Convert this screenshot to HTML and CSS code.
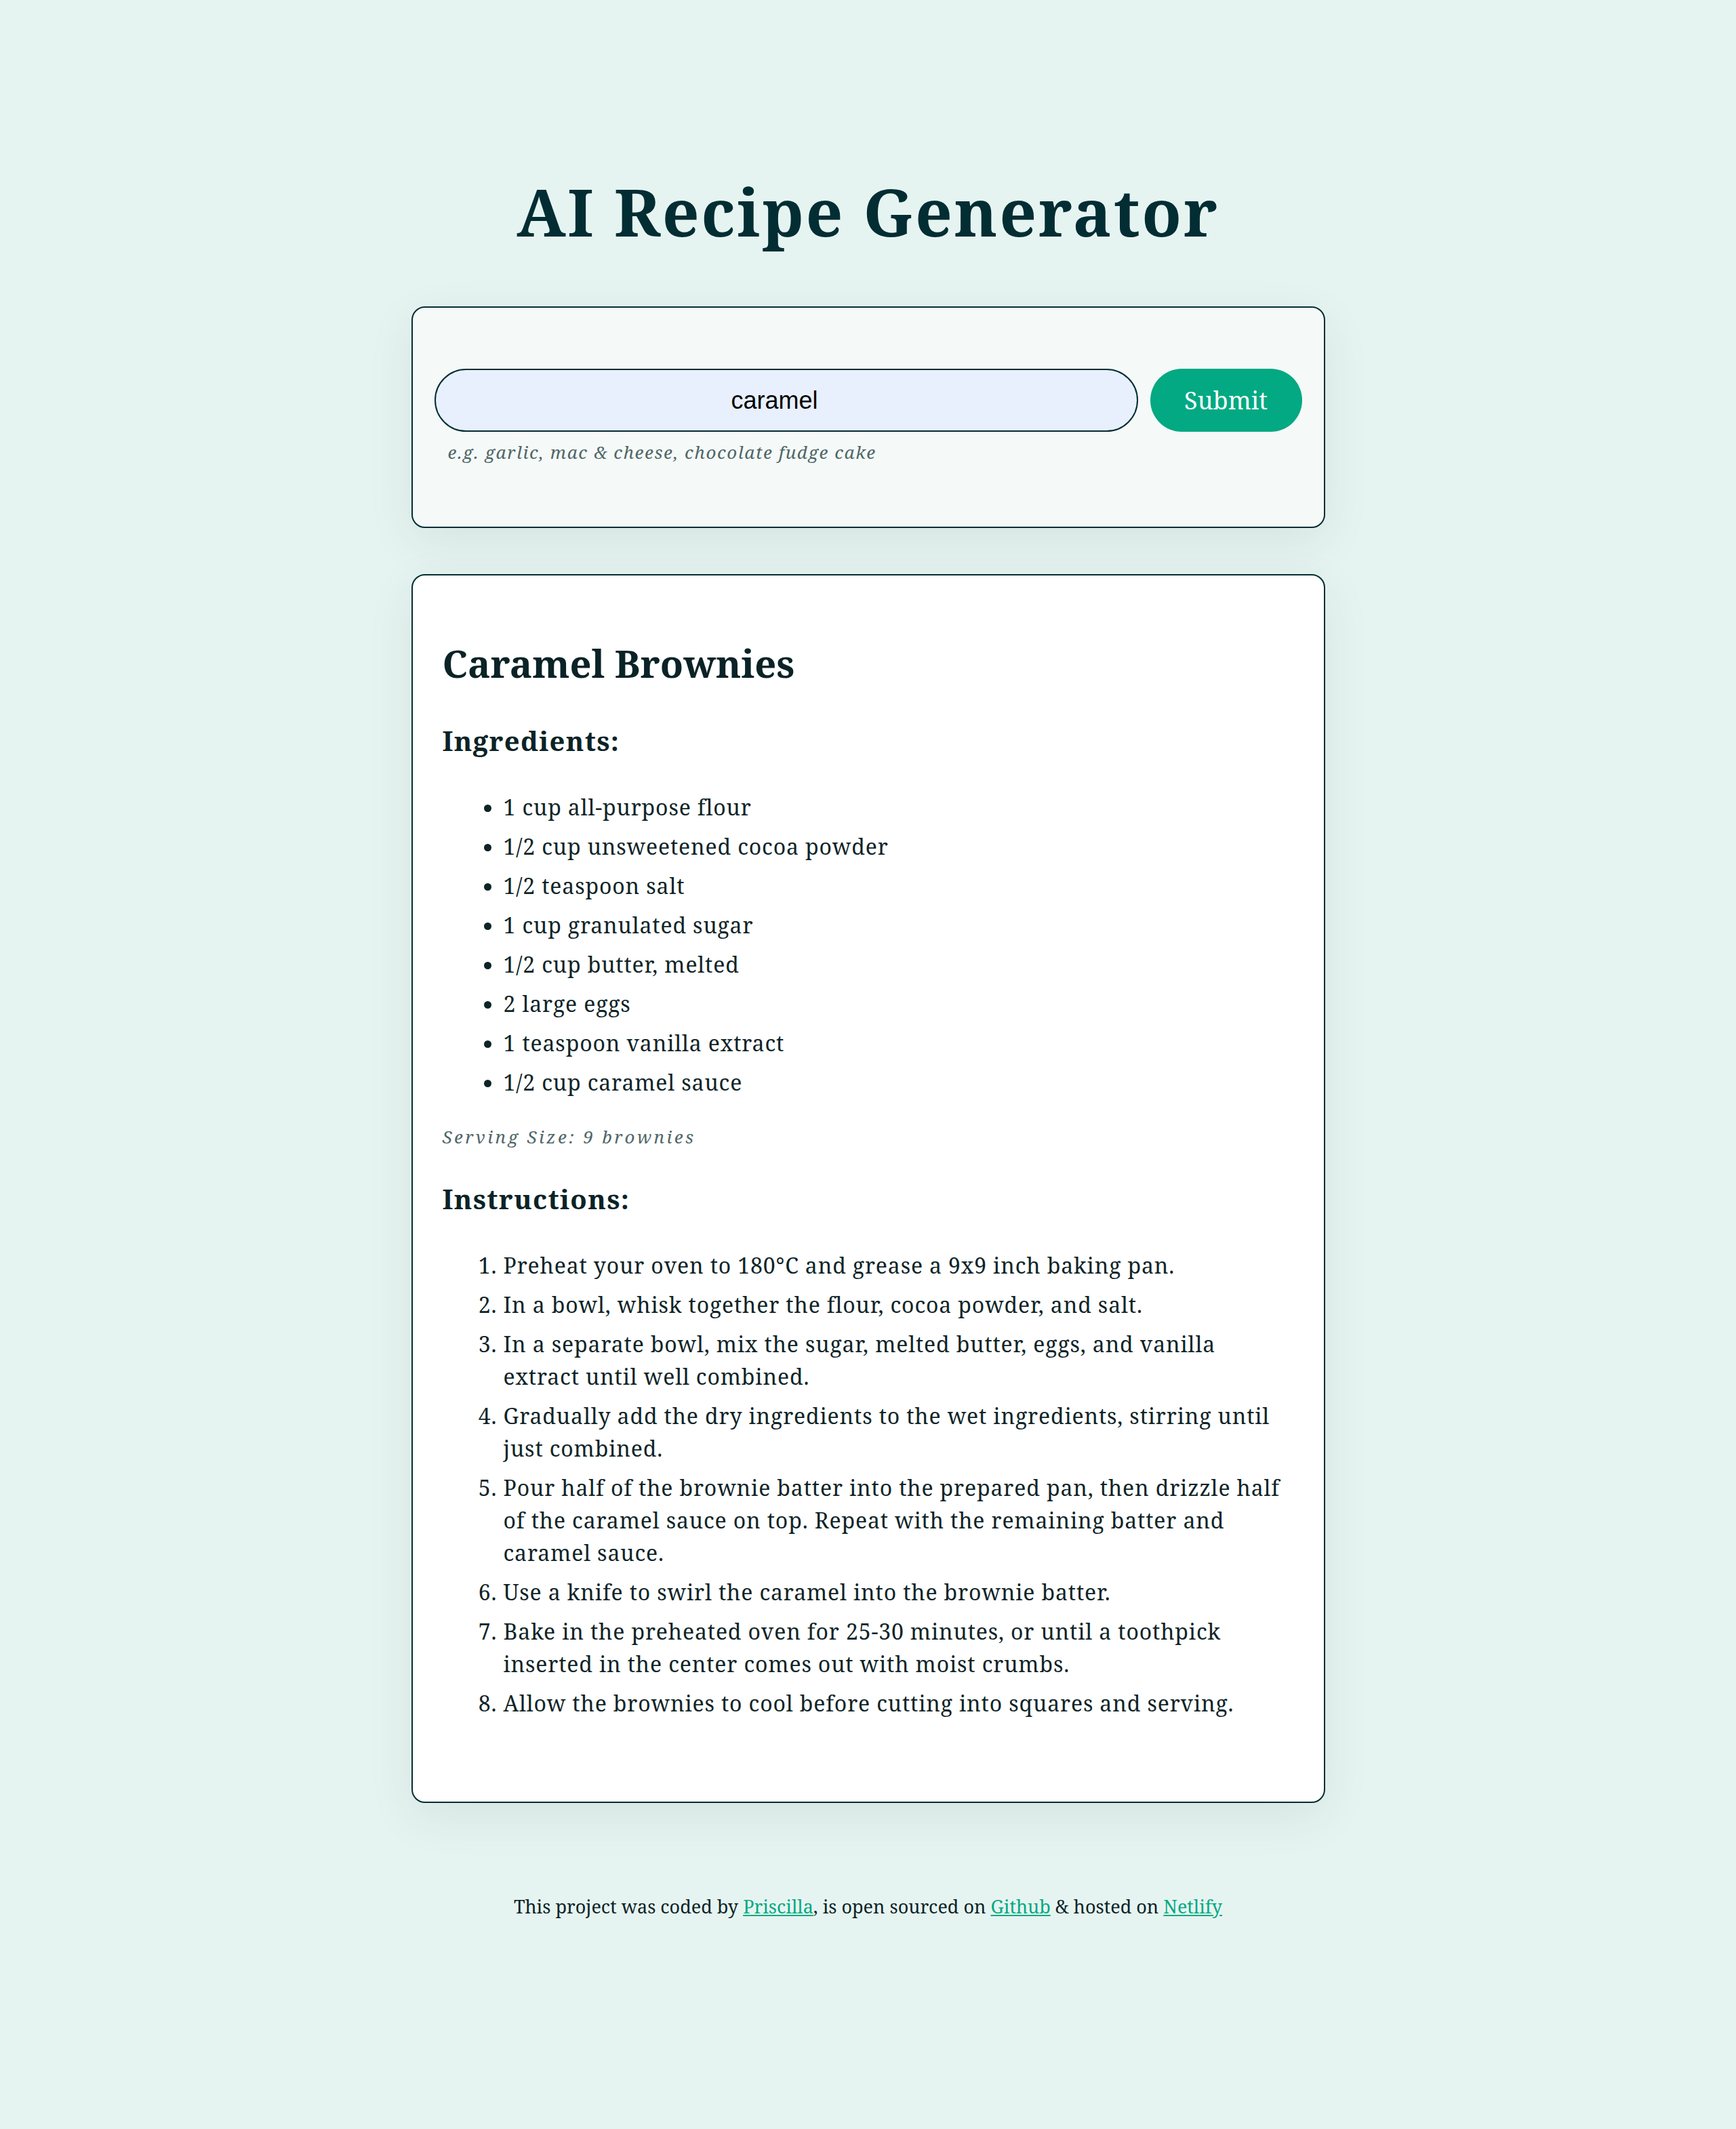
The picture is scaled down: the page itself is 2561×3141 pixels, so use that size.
FILE: index.html
```html
<!DOCTYPE html>
<html lang="en">
<head>
<meta charset="utf-8">
<title>AI Recipe Generator</title>
<link rel="stylesheet" href="styles.css">
</head>
<body>
<div class="container">
  <h1 class="title">AI Recipe Generator</h1>
  <div class="form-card">
    <form class="search-form">
      <input class="search-input" type="text" value="caramel">
      <button class="submit-btn" type="button">Submit</button>
    </form>
    <p class="hint">e.g. garlic, mac &amp; cheese, chocolate fudge cake</p>
  </div>
  <div class="recipe-card">
    <h2 class="recipe-title">Caramel Brownies</h2>
    <h3 class="section-title">Ingredients:</h3>
    <ul class="ingredients">
      <li>1 cup all-purpose flour</li>
      <li>1/2 cup unsweetened cocoa powder</li>
      <li>1/2 teaspoon salt</li>
      <li>1 cup granulated sugar</li>
      <li>1/2 cup butter, melted</li>
      <li>2 large eggs</li>
      <li>1 teaspoon vanilla extract</li>
      <li>1/2 cup caramel sauce</li>
    </ul>
    <p class="serving">Serving Size: 9 brownies</p>
    <h3 class="section-title instructions-title">Instructions:</h3>
    <ol class="instructions">
      <li>Preheat your oven to 180°C and grease a 9x9 inch baking pan.</li>
      <li>In a bowl, whisk together the flour, cocoa powder, and salt.</li>
      <li>In a separate bowl, mix the sugar, melted butter, eggs, and vanilla extract until well combined.</li>
      <li>Gradually add the dry ingredients to the wet ingredients, stirring until just combined.</li>
      <li>Pour half of the brownie batter into the prepared pan, then drizzle half of the caramel sauce on top. Repeat with the remaining batter and caramel sauce.</li>
      <li>Use a knife to swirl the caramel into the brownie batter.</li>
      <li>Bake in the preheated oven for 25-30 minutes, or until a toothpick inserted in the center comes out with moist crumbs.</li>
      <li>Allow the brownies to cool before cutting into squares and serving.</li>
    </ol>
  </div>
  <footer class="footer">
    This project was coded by <a href="#">Priscilla</a>, is open sourced on <a href="#">Github</a> &amp; hosted on <a href="#">Netlify</a>
  </footer>
</div>
</body>
</html>
```

FILE: styles.css
```css
html, body {
  margin: 0;
  padding: 0;
}

body {
  background: #e6f4f1;
  font-family: "Noto Serif", "DejaVu Serif", serif;
  color: #022b30;
  min-height: 3141px;
}

.container {
  width: 1348px;
  margin: 0 auto;
  padding-top: 247px;
}

.title {
  margin: 0 0 75px;
  font-size: 96px;
  line-height: 130px;
  font-weight: 700;
  letter-spacing: 2.6px;
  text-align: center;
  color: #022d33;
}

.form-card {
  box-sizing: border-box;
  background: #f5f9f8;
  border: 2px solid #032d33;
  border-radius: 20px;
  padding: 90px 32px 92px;
  box-shadow: 0 20px 70px rgba(3, 45, 51, 0.08);
}

.search-form {
  display: flex;
  gap: 18px;
  margin: 0;
}

.search-input {
  flex: 1;
  box-sizing: border-box;
  height: 93px;
  border: 2px solid #032d33;
  border-radius: 50px;
  background: #e8f0fe;
  font-family: "Liberation Sans", Arial, sans-serif;
  font-size: 36px;
  color: #000;
  text-align: center;
  padding: 0 34px 0 0;
  outline: none;
}

.submit-btn {
  box-sizing: border-box;
  width: 224px;
  height: 93px;
  border: none;
  border-radius: 50px;
  background: #02a982;
  color: #fff;
  font-family: "Noto Serif", "DejaVu Serif", serif;
  font-size: 36px;
  cursor: pointer;
}

.hint {
  margin: 12px 0 0;
  padding-left: 20px;
  font-size: 26px;
  font-style: italic;
  letter-spacing: 1.6px;
  color: #4f6667;
}

.recipe-card {
  box-sizing: border-box;
  margin-top: 68px;
  background: #fff;
  border: 2px solid #032d33;
  border-radius: 20px;
  padding: 91px 44px 121px;
  box-shadow: 0 20px 70px rgba(3, 45, 51, 0.08);
}

.recipe-title {
  margin: 0 0 49px;
  font-size: 56px;
  font-weight: 700;
  color: #0b2326;
}

.section-title {
  margin: 0 0 47px;
  font-size: 40px;
  font-weight: 700;
  letter-spacing: 1.3px;
  color: #0b2326;
}

.ingredients,
.instructions {
  margin: 0;
  padding-left: 90px;
  font-size: 32px;
  line-height: 48px;
  letter-spacing: 0.85px;
  color: #0e2427;
}

.ingredients li,
.instructions li {
  margin-bottom: 10px;
}

.ingredients li:last-child,
.instructions li:last-child {
  margin-bottom: 0;
}

.serving {
  margin: 38px 0 46px;
  font-size: 26px;
  font-style: italic;
  letter-spacing: 3.4px;
  color: #4f6667;
}

.footer {
  margin-top: 134px;
  text-align: center;
  font-size: 27px;
  color: #0b2326;
}

.footer a {
  color: #02a982;
}
```
